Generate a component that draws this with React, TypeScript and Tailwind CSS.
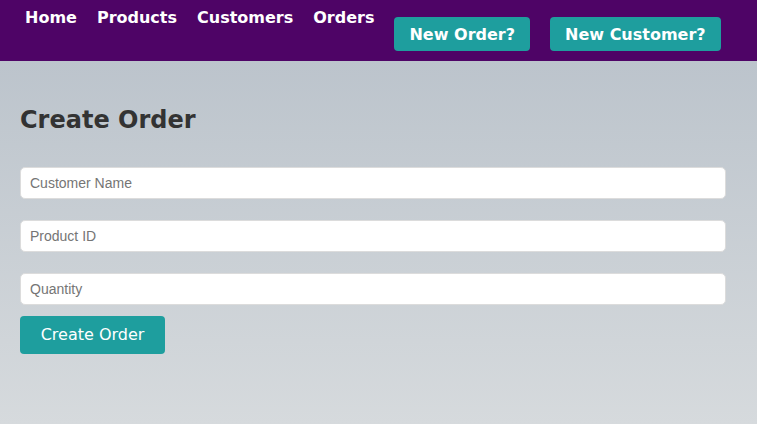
import React from "react";

export default function App() {
  const dv = { fontFamily: '"DejaVu Sans", Verdana, sans-serif' };
  return (
    <div className="min-h-screen flex flex-col" style={dv}>
      <nav className="h-[61px] bg-[#4e0466] flex items-start gap-5 pl-[25px] shrink-0">
        {["Home", "Products", "Customers", "Orders"].map((l) => (
          <a key={l} className="text-white font-bold text-[16px] leading-[19px] pt-2 cursor-pointer">
            {l}
          </a>
        ))}
        <button className="mt-[17px] h-[34px] px-[15px] rounded-[4px] bg-[#1e9e9e] text-white font-bold text-[16px] leading-[19px]">
          New Order?
        </button>
        <button className="mt-[17px] h-[34px] px-[15px] rounded-[4px] bg-[#1e9e9e] text-white font-bold text-[16px] leading-[19px]">
          New Customer?
        </button>
      </nav>
      <main className="flex-1 bg-gradient-to-b from-[#bcc4cc] to-[#d6dadd] px-5">
        <h2 className="mt-[45px] text-[24px] leading-[28px] font-bold text-[#333333]">Create Order</h2>
        <form className="mt-[33px] w-[706px] flex flex-col">
          <input
            placeholder="Customer Name"
            className="h-[32px] rounded-[5px] border border-[#dcdcdc] bg-white px-[9px] text-[14px] placeholder:text-[#757575] outline-none"
            style={{ fontFamily: '"Liberation Sans", Arial, sans-serif' }}
          />
          <input
            placeholder="Product ID"
            className="mt-[21px] h-[32px] rounded-[5px] border border-[#dcdcdc] bg-white px-[9px] text-[14px] placeholder:text-[#757575] outline-none"
            style={{ fontFamily: '"Liberation Sans", Arial, sans-serif' }}
          />
          <input
            placeholder="Quantity"
            className="mt-[21px] h-[32px] rounded-[5px] border border-[#dcdcdc] bg-white px-[9px] text-[14px] placeholder:text-[#757575] outline-none"
            style={{ fontFamily: '"Liberation Sans", Arial, sans-serif' }}
          />
          <button
            type="button"
            className="mt-[11px] self-start h-[38px] w-[145px] rounded-[4px] bg-[#1e9e9e] text-white text-[16px]"
          >
            Create Order
          </button>
        </form>
      </main>
    </div>
  );
}
